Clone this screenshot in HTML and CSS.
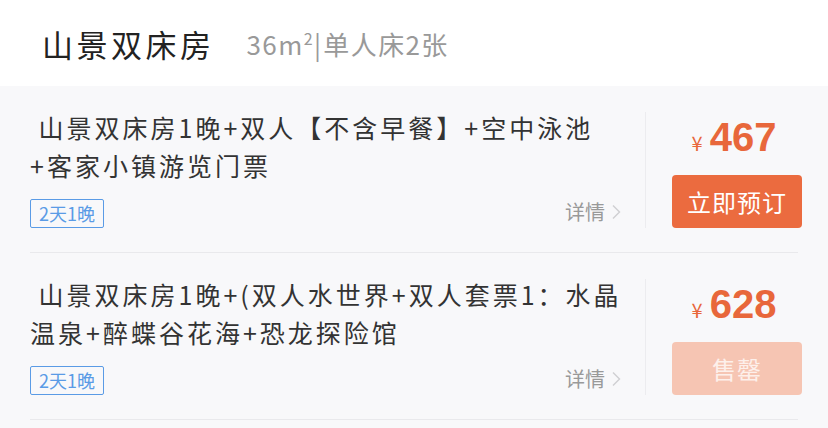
FILE: index.html
```html
<!DOCTYPE html>
<html lang="zh-CN">
<head>
    <meta charset="utf-8">
    <link rel="stylesheet" href="styles.css">
</head>
<body>
    <div class="room-head">
        <span class="room-name">山景双床房</span>
        <span class="room-info">36m<sup>2</sup><i class="bar">|</i>单人床2张</span>
    </div>

    <div class="plans">
        <div class="plan">
            <div class="plan-main">
                <div class="plan-title">&nbsp;山景双床房1晚+双人【不含早餐】+空中泳池+客家小镇游览门票</div>
                <div class="plan-foot">
                    <span class="tag">2天1晚</span>
                    <span class="more">详情<svg width="10" height="16" viewBox="0 0 10 16"><path d="M2 1.5 L8.5 8 L2 14.5" fill="none" stroke="#cfcfd2" stroke-width="1.4"/></svg></span>
                </div>
            </div>
            <div class="plan-side">
                <div class="price"><span class="yen">¥</span>467</div>
                <button type="button" class="book">立即预订</button>
            </div>
        </div>

        <div class="plan">
            <div class="plan-main">
                <div class="plan-title">&nbsp;山景双床房1晚+(双人水世界+双人套票1：水晶温泉+醉蝶谷花海+恐龙探险馆</div>
                <div class="plan-foot">
                    <span class="tag">2天1晚</span>
                    <span class="more">详情<svg width="10" height="16" viewBox="0 0 10 16"><path d="M2 1.5 L8.5 8 L2 14.5" fill="none" stroke="#cfcfd2" stroke-width="1.4"/></svg></span>
                </div>
            </div>
            <div class="plan-side">
                <div class="price"><span class="yen">¥</span>628</div>
                <button type="button" class="book sold" disabled>售罄</button>
            </div>
        </div>
    </div>
</body>
</html>
```

FILE: styles.css
```css
    body {
        margin: 0;
        background: #f8f8fa;
        font-family: "Noto Sans CJK SC", "Noto Sans", sans-serif;
        color: #333;
    }

    /* room header */
    .room-head {
        height: 86px;
        background: #fff;
        display: flex;
        align-items: center;
        padding-left: 42px;
    }

    .room-name {
        font-size: 31px;
        letter-spacing: 3.5px;
        color: #222;
    }

    .room-info {
        margin-left: 32px;
        font-size: 26px;
        letter-spacing: 1.4px;
        color: #999;
    }

    .room-info sup {
        font-size: 16px;
        vertical-align: 10px;
        line-height: 0;
    }

    .bar {
        font-style: normal;
        margin: 0 1px 0 0;
    }

    /* plan list */
    .plans {
        padding: 0 30px;
    }

    .plan {
        display: flex;
        padding: 22px 0 24px;
        border-bottom: 1px solid #e9e9ec;
    }

    .plan-main {
        flex: 1;
        padding-right: 16px;
    }

    .plan-title {
        font-size: 25px;
        line-height: 38px;
        letter-spacing: 3px;
        color: #333;
    }

    .plan-foot {
        display: flex;
        justify-content: space-between;
        align-items: flex-end;
        margin-top: 13px;
    }

    .tag {
        height: 27px;
        line-height: 27px;
        padding: 0 8px;
        border: 1px solid #5a9be6;
        border-radius: 2px;
        font-size: 18px;
        color: #5a9be6;
    }

    .more {
        display: flex;
        align-items: center;
        font-size: 20px;
        color: #999;
        margin: 0 8px 2px 0;
    }

    .more svg {
        margin-left: 6px;
    }

    .plan-side {
        width: 130px;
        margin: 4px -4px 0 0;
        padding-left: 26px;
        border-left: 1px solid #ececef;
        display: flex;
        flex-direction: column;
        align-items: stretch;
    }

    .price {
        display: flex;
        justify-content: center;
        align-items: baseline;
        height: 50px;
        color: #e8673b;
        font-family: "Liberation Sans", sans-serif;
        font-weight: bold;
        font-size: 40px;
        line-height: 50px;
        padding-right: 6px;
    }

    .yen {
        font-family: "Noto Sans CJK SC", sans-serif;
        font-weight: normal;
        font-size: 20px;
        line-height: 1;
        margin-right: 7px;
    }

    .book {
        height: 53px;
        margin-top: 13px;
        border: none;
        border-radius: 4px;
        background: #eb6b3f;
        color: #fff;
        font-family: "Noto Sans CJK SC", sans-serif;
        font-size: 24px;
        letter-spacing: 1px;
        padding: 0;
    }

    .book.sold {
        background: #f6c5b3;
        color: #fdf0eb;
    }
```
